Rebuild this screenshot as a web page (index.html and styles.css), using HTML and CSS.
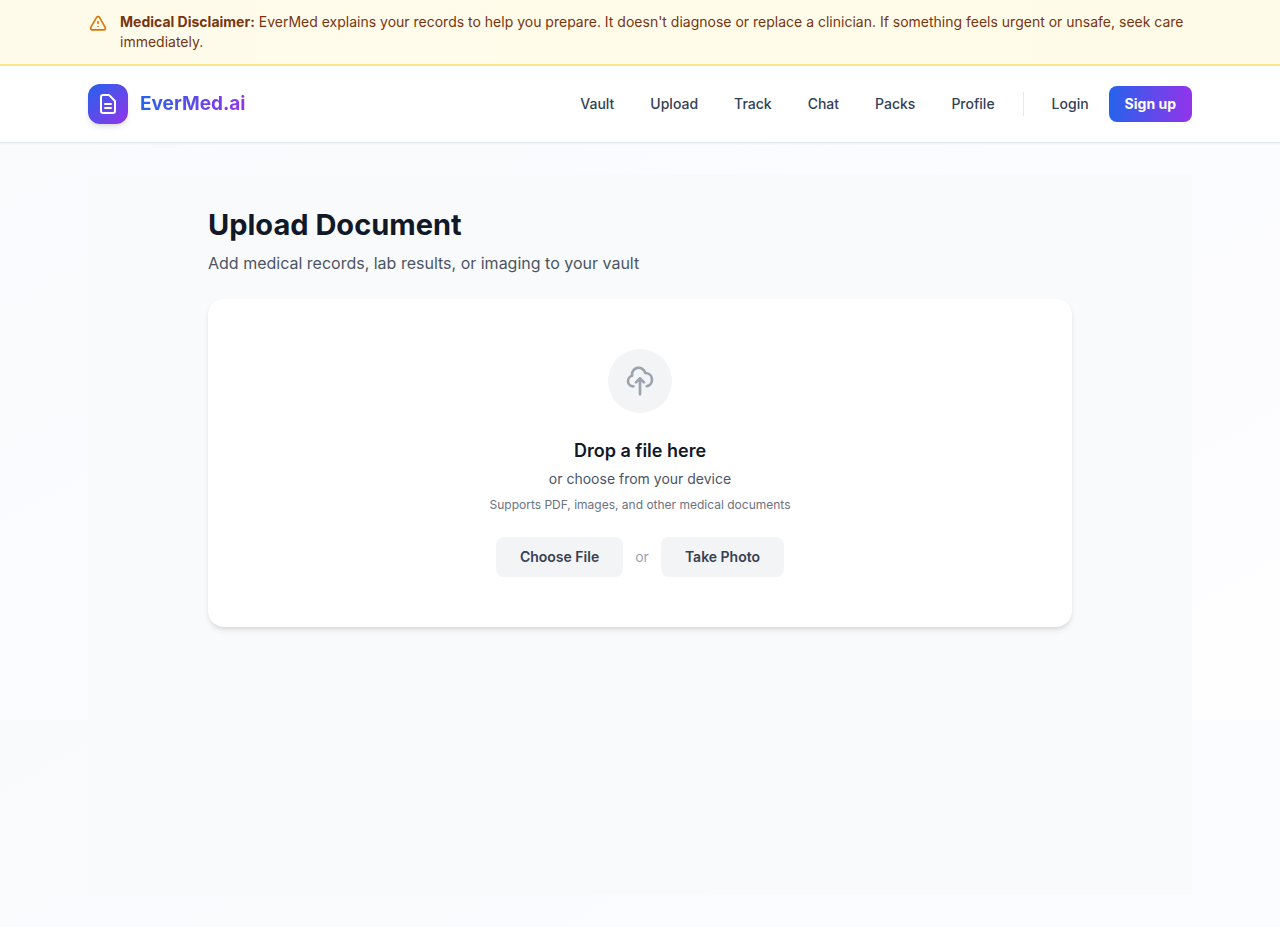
FILE: index.html
```html
<!DOCTYPE html>
<html lang="en">
<head>
  <meta charset="utf-8">
  <meta name="viewport" content="width=device-width, initial-scale=1">
  <title>EverMed.ai</title>
  <link rel="stylesheet" href="styles.css">
</head>
<body>
  <aside class="disclaimer">
    <div class="container disclaimer-row">
      <svg class="disclaimer-icon" viewBox="0 0 24 24" fill="none" stroke="currentColor" stroke-width="2" stroke-linecap="round" stroke-linejoin="round" aria-hidden="true"><path d="M12 9v2m0 4h.01m-6.938 4h13.856c1.54 0 2.502-1.667 1.732-3L13.732 4c-.77-1.333-2.694-1.333-3.464 0L3.34 16c-.77 1.333.192 3 1.732 3z"/></svg>
      <p class="disclaimer-text"><strong>Medical Disclaimer:</strong> EverMed explains your records to help you prepare. It doesn't diagnose or replace a clinician. If something feels urgent or unsafe, seek care immediately.</p>
    </div>
  </aside>
  <header class="header">
    <div class="container header-row">
      <a class="brand" href="#">
        <span class="brand-mark">
          <svg class="brand-icon" viewBox="0 0 24 24" fill="none" stroke="currentColor" stroke-width="2" stroke-linecap="round" stroke-linejoin="round" aria-hidden="true"><path d="M9 12h6m-6 4h6m2 5H7a2 2 0 01-2-2V5a2 2 0 012-2h5.586a1 1 0 01.707.293l5.414 5.414a1 1 0 01.293.707V19a2 2 0 01-2 2z"/></svg>
        </span>
        <span class="brand-name">EverMed.ai</span>
      </a>
      <nav class="nav">
        <a class="nav-link" href="#">Vault</a>
        <a class="nav-link" href="#">Upload</a>
        <a class="nav-link" href="#">Track</a>
        <a class="nav-link" href="#">Chat</a>
        <a class="nav-link" href="#">Packs</a>
        <a class="nav-link" href="#">Profile</a>
        <span class="nav-divider"></span>
        <a class="nav-link" href="#">Login</a>
        <a class="signup" href="#">Sign up</a>
      </nav>
    </div>
  </header>
  <main class="container main">
    <div class="page">
      <div class="page-inner">
        <h1 class="title">Upload Document</h1>
        <p class="subtitle">Add medical records, lab results, or imaging to your vault</p>
        <section class="card">
          <div class="upload-badge">
            <svg class="upload-icon" viewBox="0 0 24 24" fill="none" stroke="currentColor" stroke-width="2" stroke-linecap="round" stroke-linejoin="round" aria-hidden="true"><path d="M7 16a4 4 0 01-.88-7.903A5 5 0 1115.9 6L16 6a5 5 0 011 9.9M15 13l-3-3m0 0l-3 3m3-3v12"/></svg>
          </div>
          <h2 class="drop-title">Drop a file here</h2>
          <p class="drop-text">or choose from your device</p>
          <p class="drop-hint">Supports PDF, images, and other medical documents</p>
          <div class="actions">
            <button class="button" type="button">Choose File</button>
            <span class="or">or</span>
            <button class="button" type="button">Take Photo</button>
          </div>
        </section>
      </div>
    </div>
  </main>
</body>
</html>
```

FILE: styles.css
```css
* {
  box-sizing: border-box;
}

html {
  background: linear-gradient(to bottom right, #f8fafc 0%, #fbfcff 50%, #fefdff 100%) 0 0 / 100% 720px;
}

body {
  margin: 0;
  font-family: Inter, "Liberation Sans", sans-serif;
  font-size: 16px;
  line-height: 24px;
  color: #111827;
  -webkit-font-smoothing: antialiased;
}

h1, h2, p {
  margin: 0;
}

a {
  color: inherit;
  text-decoration: none;
}

svg {
  display: block;
}

.container {
  max-width: 1152px;
  margin: 0 auto;
  padding: 0 24px;
}

.disclaimer {
  padding: 12px 0;
  background: linear-gradient(to right, #fffbeb, #fefce8);
  border-bottom: 2px solid #fde68a;
}

.disclaimer-row {
  display: flex;
  align-items: flex-start;
  gap: 12px;
}

.disclaimer-icon {
  flex: none;
  width: 20px;
  height: 20px;
  margin-top: 2px;
  color: #d97706;
}

.disclaimer-text {
  font-size: 14px;
  line-height: 20px;
  color: #78350f;
}

.disclaimer-text strong {
  font-weight: 700;
}

.header {
  padding: 18px 0;
  background: #fff;
  border-bottom: 1px solid #e2e8f0;
  box-shadow: 0 1px 2px rgba(0, 0, 0, 0.05);
}

.header-row {
  display: flex;
  align-items: center;
  justify-content: space-between;
}

.brand {
  display: flex;
  align-items: center;
  gap: 12px;
}

.brand-mark {
  display: flex;
  align-items: center;
  justify-content: center;
  width: 40px;
  height: 40px;
  border-radius: 12px;
  color: #fff;
  background: linear-gradient(135deg, #2563eb, #9333ea);
  box-shadow: 0 4px 6px -1px rgba(0, 0, 0, 0.1), 0 2px 4px -2px rgba(0, 0, 0, 0.1);
}

.brand-icon {
  width: 24px;
  height: 24px;
}

.brand-name {
  font-size: 19px;
  line-height: 28px;
  font-weight: 700;
  color: transparent;
  background: linear-gradient(to right, #2563eb, #9333ea);
  -webkit-background-clip: text;
  background-clip: text;
}

.nav {
  display: flex;
  align-items: center;
  gap: 4px;
  font-size: 14px;
  line-height: 20px;
}

.nav-link {
  padding: 8px 16px;
  font-weight: 500;
  color: #334155;
}

.nav-divider {
  width: 1px;
  height: 24px;
  margin: 0 8px;
  background: #e2e8f0;
}

.signup {
  padding: 8px 16px;
  border-radius: 8px;
  font-weight: 700;
  color: #fff;
  background: linear-gradient(to right, #2563eb, #9333ea);
}

.main {
  padding-top: 32px;
  padding-bottom: 32px;
}

.page {
  min-height: 720px;
  padding: 32px 16px;
  background: #f9fafb;
}

.page-inner {
  max-width: 864px;
  margin: 0 auto;
}

.title {
  font-size: 29px;
  line-height: 36px;
  font-weight: 700;
}

.subtitle {
  margin-top: 8px;
  color: #4b5563;
}

.card {
  display: flex;
  flex-direction: column;
  align-items: center;
  margin-top: 24px;
  padding: 50px;
  border-radius: 16px;
  text-align: center;
  background: #fff;
  box-shadow: 0 4px 6px -1px rgba(0, 0, 0, 0.1), 0 2px 4px -2px rgba(0, 0, 0, 0.1);
}

.upload-badge {
  display: flex;
  align-items: center;
  justify-content: center;
  width: 64px;
  height: 64px;
  border-radius: 50%;
  color: #9ca3af;
  background: #f3f4f6;
}

.upload-icon {
  width: 32px;
  height: 32px;
}

.drop-title {
  margin-top: 24px;
  font-size: 18px;
  line-height: 28px;
  font-weight: 600;
}

.drop-text {
  margin-top: 4px;
  font-size: 14px;
  line-height: 20px;
  color: #4b5563;
}

.drop-hint {
  margin-top: 8px;
  font-size: 12px;
  line-height: 16px;
  color: #6b7280;
}

.actions {
  display: flex;
  flex-wrap: wrap;
  align-items: center;
  justify-content: center;
  gap: 12px;
  margin-top: 24px;
  font-size: 14px;
  line-height: 20px;
}

.button {
  padding: 10px 24px;
  border: 0;
  border-radius: 8px;
  font: inherit;
  font-weight: 600;
  color: #374151;
  background: #f3f4f6;
  cursor: pointer;
}

.or {
  color: #9ca3af;
}
```
